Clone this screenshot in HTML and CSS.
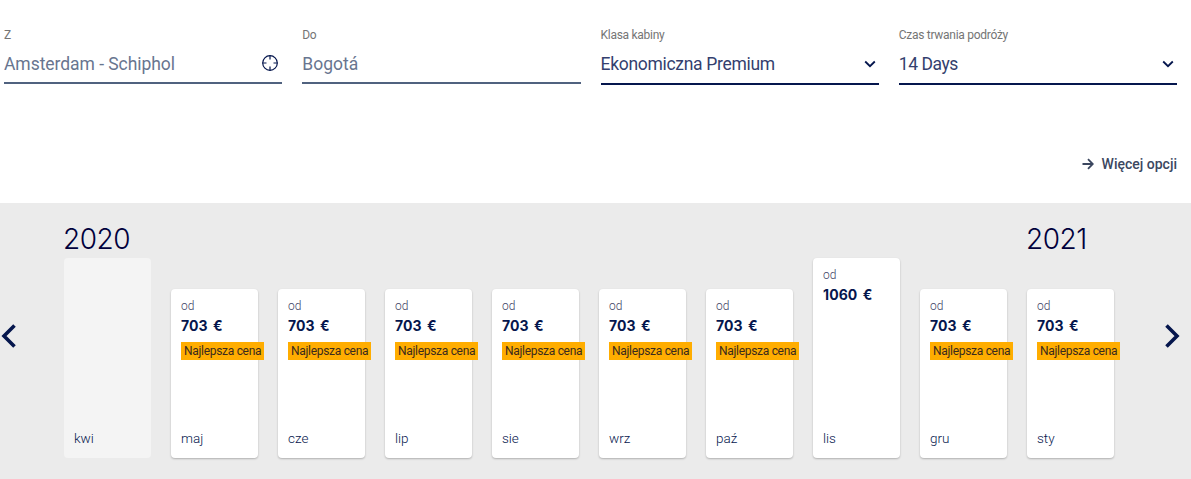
FILE: index.html
```html
<!DOCTYPE html>
<html lang="pl">
<head>
    <meta charset="UTF-8">
    <meta name="viewport" content="width=device-width, initial-scale=1.0">
    <title>Najlepsze ceny</title>
    <link rel="stylesheet" href="styles.css">
</head>
<body>
    <form class="search">
        <div class="field">
            <span class="label">Z</span>
            <div class="control">
                <span class="value origin">Amsterdam - Schiphol</span>
                <svg class="locate" width="18" height="18" viewBox="0 0 18 18">
                    <circle cx="9" cy="9" r="7.3"/>
                    <path d="M9 1.5v4M9 12.5v4M1.5 9h4M12.5 9h4"/>
                </svg>
            </div>
        </div>
        <div class="field">
            <span class="label">Do</span>
            <div class="control">
                <span class="value">Bogotá</span>
            </div>
        </div>
        <div class="field select">
            <span class="label">Klasa kabiny</span>
            <div class="control">
                <span class="value cabin">Ekonomiczna Premium</span>
                <svg class="chevron" width="12" height="8" viewBox="0 0 12 8"><path d="M1.200 1.500L6 6.200l4.800-4.700"/></svg>
            </div>
        </div>
        <div class="field select">
            <span class="label">Czas trwania podróży</span>
            <div class="control">
                <span class="value days">14 Days</span>
                <svg class="chevron" width="12" height="8" viewBox="0 0 12 8"><path d="M1.200 1.500L6 6.200l4.800-4.700"/></svg>
            </div>
        </div>
    </form>

    <div class="more">
        <svg width="12" height="12" viewBox="0 0 12 12"><path d="M.5 6h10M6 1.200L10.800 6 6 10.800"/></svg>
        <span>Więcej opcji</span>
    </div>

    <div class="calendar">
        <svg class="arrow" width="16" height="24" viewBox="0 0 16 24"><path d="M14.500 1.500L4 12l10.500 10.500"/></svg>
        <div class="months" id="months"></div>
        <svg class="arrow next" width="16" height="24" viewBox="0 0 16 24"><path d="M1.500 1.500L12 12 1.500 22.500"/></svg>
    </div>

    <script>
        const months = [
            { name: 'kwi', year: 2020 },
            { name: 'maj', price: 703 },
            { name: 'cze', price: 703 },
            { name: 'lip', price: 703 },
            { name: 'sie', price: 703 },
            { name: 'wrz', price: 703 },
            { name: 'paź', price: 703 },
            { name: 'lis', price: 1060 },
            { name: 'gru', price: 703 },
            { name: 'sty', price: 703, year: 2021 }
        ];

        const prices = months.filter(m => m.price).map(m => m.price);
        const best = Math.min(...prices);

        document.getElementById('months').innerHTML = months.map(m => {
            const isBest = m.price === best;
            const type = !m.price ? 'empty' : isBest ? 'best' : '';
            return `
                <div class="month">
                    <div class="year">${m.year || ''}</div>
                    <div class="card ${type}">
                        ${m.price ? `<span class="from">od</span><span class="price">${m.price} €</span>` : ''}
                        ${isBest ? '<span class="badge">Najlepsza cena</span>' : ''}
                        <span class="name">${m.name}</span>
                    </div>
                </div>`;
        }).join('');
    </script>
</body>
</html>
```

FILE: styles.css
```css
body {
    margin: 0;
    background: #fff;
    font-family: Roboto, "Liberation Sans", sans-serif;
    color: #05164d;
}
svg {
    fill: none;
    stroke: #05164d;
    flex-shrink: 0;
}
.search {
    display: grid;
    grid-template-columns: repeat(4, 1fr);
    gap: 20px;
    align-items: start;
    padding: 27px 14px 0 4px;
}
.label {
    display: block;
    font-size: 12px;
    letter-spacing: -0.28px;
    line-height: 16px;
    color: #757575;
}
.control {
    display: flex;
    justify-content: space-between;
    align-items: center;
    height: 39px;
    border-bottom: 2px solid #50627f;
    color: #68758f;
}
.select .control {
    height: 40px;
    border-color: #05164d;
    color: #343f6e;
}
.value {
    font-size: 17.5px;
    line-height: 24px;
    padding-top: 3px;
    white-space: nowrap;
}
.select .value {
    padding-top: 2px;
}
.origin {
    letter-spacing: -0.05px;
}
.cabin {
    letter-spacing: -0.3px;
}
.days {
    letter-spacing: -0.45px;
}
.locate {
    margin: 1px 3px 0 0;
    stroke-width: 1.2;
}
.chevron {
    margin: 1px 3px 0 0;
    stroke-width: 1.8;
}
.more {
    display: flex;
    justify-content: flex-end;
    align-items: center;
    gap: 8px;
    height: 20px;
    padding: 69px 14px 29px 0;
    font-size: 14px;
    font-weight: 500;
    color: #3b475f;
}
.more svg {
    stroke: #3b475f;
    stroke-width: 1.8;
}
.calendar {
    display: flex;
    box-sizing: border-box;
    height: 276px;
    padding: 20px 10px 21px 0;
    background: #ebebeb;
}
.arrow {
    margin-top: 101px;
    stroke-width: 3.6;
}
.arrow.next {
    margin-left: auto;
}
.months {
    display: flex;
    gap: 20px;
    margin-left: 48px;
}
.month {
    display: flex;
    flex-direction: column;
    width: 87px;
}
.year {
    height: 35px;
    margin-left: -1px;
    font-family: Inter, sans-serif;
    font-size: 28px;
    font-weight: 300;
    letter-spacing: -0.5px;
    line-height: 33px;
    color: #00003c;
}
.card {
    display: flex;
    flex-direction: column;
    align-items: flex-start;
    flex: 1;
    box-sizing: border-box;
    padding: 9px 10px 10px;
    background: #fff;
    border-radius: 4px;
    box-shadow: 0 1px 2px rgba(0, 0, 0, 0.25);
}
.card.best {
    margin-top: 31px;
}
.card.empty {
    background: #f4f4f4;
    box-shadow: none;
}
.from {
    font-size: 12px;
    font-weight: 300;
    line-height: 16px;
    color: #3c4264;
}
.price {
    font-family: Inter, sans-serif;
    font-size: 14px;
    font-weight: 700;
    letter-spacing: 0.1px;
    word-spacing: 2px;
    line-height: 24px;
    white-space: nowrap;
}
.badge {
    margin-top: 4px;
    padding: 0 3px;
    background: #ffad00;
    font-size: 12px;
    letter-spacing: -0.3px;
    line-height: 18px;
    color: #3a2a1e;
    white-space: nowrap;
}
.name {
    margin-top: auto;
    font-size: 13.5px;
    font-weight: 300;
    line-height: 20px;
}
```
